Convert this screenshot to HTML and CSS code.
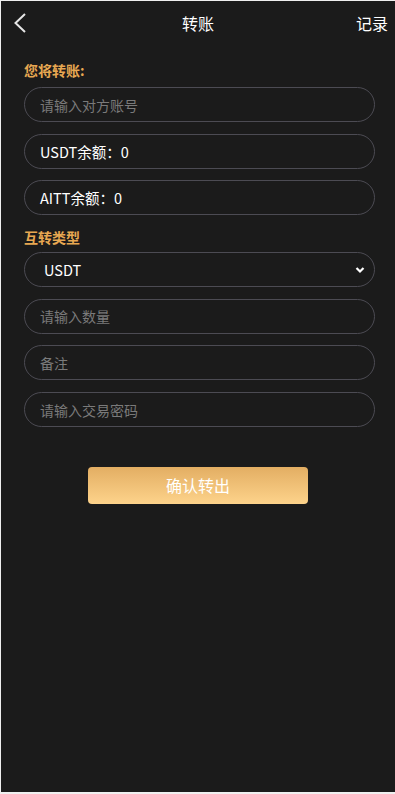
FILE: index.html
```html
<!DOCTYPE html>
<html lang="zh">
<head>
<meta charset="utf-8">
<link rel="stylesheet" href="styles.css">
</head>
<body>
<div class="page">
  <header class="topbar">
    <svg class="back" width="14" height="20" viewBox="0 0 14 20"><path d="M12 1 L2.5 10 L12 19" fill="none" stroke="#e6e6e6" stroke-width="2"/></svg>
    <div class="title">转账</div>
    <div class="record">记录</div>
  </header>
  <main class="form">
    <div class="label first">您将转账:</div>
    <div class="field placeholder">请输入对方账号</div>
    <div class="field value">USDT余额：0</div>
    <div class="field value">AITT余额：0</div>
    <div class="label second">互转类型</div>
    <div class="field select">
      <span>USDT</span>
      <svg class="chev" width="10" height="8" viewBox="0 0 10 8"><path d="M1.5 2 L5 5.5 L8.5 2" fill="none" stroke="#fff" stroke-width="2.2"/></svg>
    </div>
    <div class="field placeholder">请输入数量</div>
    <div class="field placeholder">备注</div>
    <div class="field placeholder">请输入交易密码</div>
    <div class="btnrow"><div class="btn">确认转出</div></div>
  </main>
</div>
</body>
</html>
```

FILE: styles.css
```css
html, body { margin: 0; padding: 0; }
body {
  background: #efefef;
  font-family: "Noto Sans CJK SC", "Liberation Sans", sans-serif;
}
.page {
  margin: 1px 0 0 1px;
  height: 791px;
  background: #1b1b1b;
  overflow: hidden;
}
.topbar {
  height: 44px;
  display: flex;
  align-items: center;
  justify-content: space-between;
  position: relative;
  padding: 0 7px 0 12px;
}
.back { display: block; margin-top: -1px; }
.title {
  position: absolute;
  left: 0; right: 0;
  text-align: center;
  color: #fff;
  font-size: 16px;
  line-height: 44px;
  pointer-events: none;
}
.record {
  color: #fff;
  font-size: 16px;
  line-height: 44px;
}
.form {
  padding: 0 20px 0 23px;
}
.label {
  color: #e8a852;
  font-size: 14px;
  font-weight: bold;
  line-height: 20px;
}
.label.first { margin-top: 15px; margin-bottom: 7px; }
.label.second { margin-top: 9px; margin-bottom: 5px; }
.field {
  box-sizing: border-box;
  height: 35px;
  border: 1px solid #4c4b53;
  border-radius: 17.5px;
  display: flex;
  align-items: center;
  padding: 0 15px;
  font-size: 14px;
  margin-bottom: 11.7px;
}
.placeholder { color: #7a7a7a; }
.value { color: #fff; font-size: 14.5px; }
.select {
  color: #fff;
  justify-content: space-between;
  padding: 0 0 0 19px;
  font-size: 14.5px;
}
.chev { margin-right: 9px; }
.btnrow {
  display: flex;
  justify-content: center;
  padding: 28px 0 0 0;
  margin-left: -3px;
}
.btn {
  width: 220px;
  height: 37px;
  border-radius: 4px;
  background: linear-gradient(#e3ae63, #fdd38b);
  color: #fff;
  font-size: 16px;
  display: flex;
  align-items: center;
  justify-content: center;
}
```
